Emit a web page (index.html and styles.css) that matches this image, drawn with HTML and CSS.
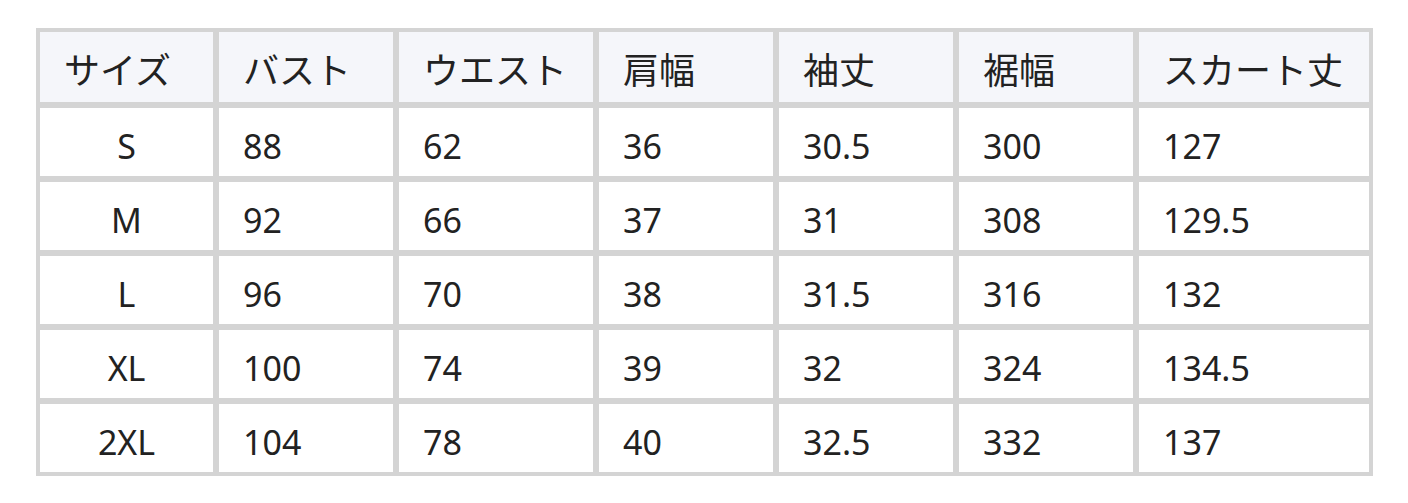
FILE: index.html
```html
<!DOCTYPE html>
<html lang="ja">
<head>
<meta charset="utf-8">
<title>サイズ表</title>
<link rel="stylesheet" href="styles.css">
</head>
<body>
<table class="size-table">
  <thead>
    <tr>
      <th class="c1">サイズ</th>
      <th class="c2">バスト</th>
      <th class="c3">ウエスト</th>
      <th class="c4">肩幅</th>
      <th class="c5">袖丈</th>
      <th class="c6">裾幅</th>
      <th class="c7">スカート丈</th>
    </tr>
  </thead>
  <tbody>
    <tr><td class="size">S</td><td>88</td><td>62</td><td>36</td><td>30.5</td><td>300</td><td>127</td></tr>
    <tr><td class="size">M</td><td>92</td><td>66</td><td>37</td><td>31</td><td>308</td><td>129.5</td></tr>
    <tr><td class="size">L</td><td>96</td><td>70</td><td>38</td><td>31.5</td><td>316</td><td>132</td></tr>
    <tr><td class="size">XL</td><td>100</td><td>74</td><td>39</td><td>32</td><td>324</td><td>134.5</td></tr>
    <tr><td class="size">2XL</td><td>104</td><td>78</td><td>40</td><td>32.5</td><td>332</td><td>137</td></tr>
  </tbody>
</table>
</body>
</html>
```

FILE: styles.css
```css
html, body {
  margin: 0;
  padding: 0;
  background: #ffffff;
}

body {
  padding: 28px 0 0 36px;
  font-family: "Noto Sans", "Noto Sans CJK JP", sans-serif;
  color: #222222;
}

.size-table {
  border-collapse: separate;
  border-spacing: 2px;
  background: #d4d4d4;
  table-layout: fixed;
  width: 1337px;
}

.size-table th,
.size-table td {
  box-sizing: border-box;
  border: 2px solid #d4d4d4;
  padding: 6px 0 0 24px;
  font-size: 34px;
  font-weight: 400;
  line-height: 40px;
  text-align: left;
  vertical-align: middle;
  white-space: nowrap;
}

.size-table th {
  height: 74px;
  font-size: 36px;
  padding-top: 8px;
  background: #f5f6fa;
}

.size-table td {
  height: 72px;
  padding-top: 7px;
  background: #ffffff;
}

.size-table td.size {
  text-align: center;
  padding-left: 0;
}

.c1 { width: 177px; }
.c2 { width: 178px; }
.c3 { width: 198px; }
.c4 { width: 178px; }
.c5 { width: 178px; }
.c6 { width: 178px; }
.c7 { width: 234px; }
```
